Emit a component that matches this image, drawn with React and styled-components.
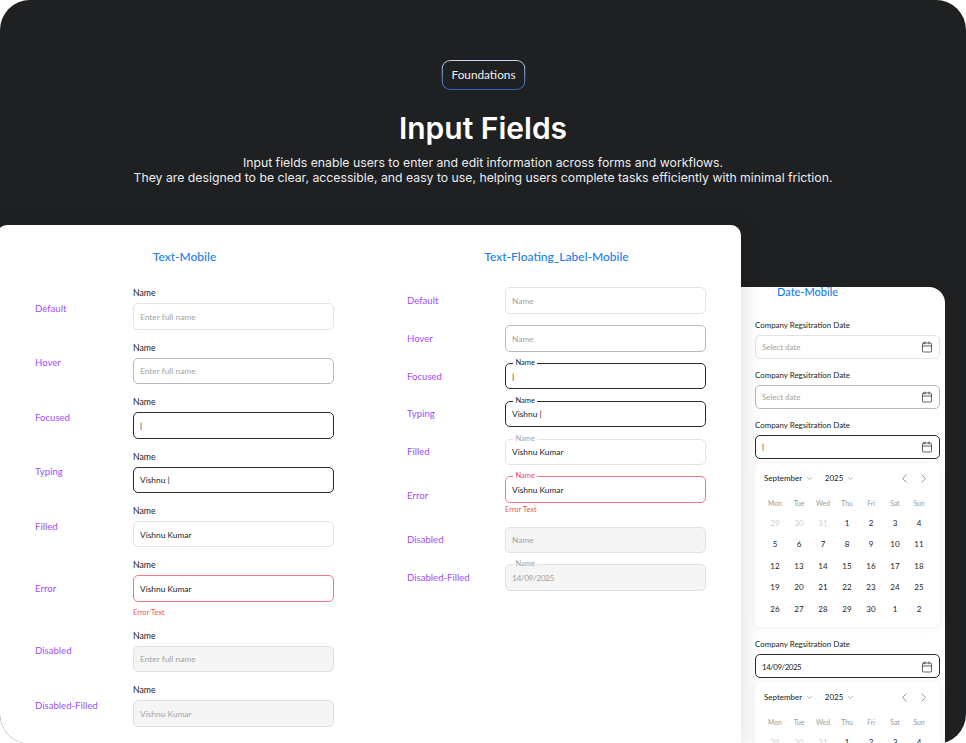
import React from 'react';
import styled, { createGlobalStyle, css } from 'styled-components';
import { Calendar, ChevronDown, ChevronLeft, ChevronRight } from 'lucide-react';

const GlobalStyle = createGlobalStyle`
  html, body {
    margin: 0;
    padding: 0;
    background: #fff;
    overflow: hidden;
    font-family: "Lato", "Liberation Sans", sans-serif;
  }
  * { box-sizing: border-box; }
`

const Panel = styled.div`
  width: 966px;
  height: 744px;
  background: #1e2022;
  border-radius: 30px;
  overflow: hidden;
`

const Header = styled.header`
  height: 225px;
  padding-top: 60px;
  display: flex;
  flex-direction: column;
  align-items: center;
`

const Chip = styled.div`
  width: 84px;
  height: 29.5px;
  display: flex;
  align-items: center;
  justify-content: center;
  font-size: 11.8px;
  color: #f0f0f0;
  border: 1px solid transparent;
  border-radius: 9px;
  transform: translateX(0.5px);
  background:
    linear-gradient(#1e2022, #1e2022) padding-box,
    linear-gradient(#c4d9f2, #2b62ba) border-box;
`

const Title = styled.h1`
  margin: 20.5px 0 0;
  font-family: "Inter", sans-serif;
  font-size: 30px;
  line-height: 36px;
  font-weight: 600;
  letter-spacing: 0;
  color: #fff;
`

const Subtitle = styled.p`
  margin: 9px 0 0;
  font-family: "Inter", sans-serif;
  font-size: 12.25px;
  line-height: 15px;
  text-align: center;
  color: #eceded;
`

const Sheets = styled.div`
  display: flex;
  align-items: flex-start;
`

const MainSheet = styled.section`
  position: relative;
  z-index: 1;
  flex: none;
  width: 744px;
  min-height: 520px;
  margin-left: -3px;
  padding: 0 35px 0 38px;
  display: flex;
  justify-content: space-between;
  background: #fff;
  border-radius: 10px 10px 0 0;
  box-shadow: 0 0 22px rgba(0, 0, 0, 0.16);
`

const Column = styled.div`
  width: 299px;
`

const ColumnTitle = styled.h2`
  margin: 0;
  padding-top: 25px;
  height: 62.4px;
  font-size: 12px;
  line-height: 14px;
  font-weight: 500;
  text-align: center;
  color: #1a7df0;
`

const Rows = styled.div`
  display: flex;
  flex-direction: column;
  gap: ${p => p.$gap}px;
`

const Row = styled.div`
  display: grid;
  grid-template-columns: 98px 201px;
  align-items: center;
`

const StateName = styled.span`
  font-size: 9.6px;
  color: #a04dff;
`

const FieldLabel = styled.div`
  margin-bottom: ${p => p.$gap || 4}px;
  font-size: ${p => p.$small ? 7.9 : 8.7}px;
  line-height: 12px;
  color: #222;
`

const fieldStates = {
  default: css`border-color: #e3e3e3;`,
  hover: css`border-color: #b9b9b9;`,
  focused: css`border-color: #2a2a2a; border-width: 1.3px;`,
  error: css`border-color: #f0787c; border-width: 1.2px;`,
  disabled: css`border-color: #e0e0e0; background: #f5f5f5;`,
}

const Field = styled.div`
  position: relative;
  height: ${p => p.$height || 26.4}px;
  padding: 1px 6px 0;
  display: flex;
  align-items: center;
  justify-content: space-between;
  font-size: ${p => p.$small ? 7.9 : 8.4}px;
  color: ${p => p.$muted ? '#a3a3a3' : '#1d1d1d'};
  background: #fff;
  border: 1px solid;
  border-radius: 5px;
  ${p => fieldStates[p.$state || 'default']}
`

const FieldValue = styled.span`
  letter-spacing: ${p => p.$date ? -0.45 : 0}px;
`

const FloatLabel = styled.span`
  position: absolute;
  top: -6px;
  left: 7px;
  padding: 0 2.5px;
  font-size: 7.5px;
  line-height: 10px;
  color: ${p => p.$color};
  background: linear-gradient(#fff 50%, ${p => p.$below} 50%);
`

const ErrorText = styled.div`
  margin-top: ${p => p.$gap}px;
  font-size: 7px;
  line-height: 11px;
  letter-spacing: 0.2px;
  color: #ef4a50;
`

const DateSheet = styled.section`
  flex: none;
  width: 204px;
  height: 470px;
  margin-top: 62px;
  padding: 0 5px 0 14px;
  background: #fff;
  border-radius: 0 16px 0 0;
`

const DateTitle = styled.h2`
  margin: 0;
  padding-left: 22px;
  height: 32px;
  font-size: 11px;
  line-height: 10px;
  font-weight: 500;
  color: #1a7df0;
`

const DateGroup = styled.div`
  margin-bottom: ${p => p.$after}px;
`

const Picker = styled.div`
  height: ${p => p.$height || 164}px;
  margin-bottom: ${p => p.$after || 0}px;
  padding: 0 8px;
  background: #fff;
  border-radius: 6px;
  box-shadow: 0 1px 8px rgba(0, 0, 0, 0.07);
`

const PickerHead = styled.div`
  height: 30px;
  padding: 0 1px;
  display: flex;
  align-items: center;
  font-size: 8px;
  color: #222;
`

const PickerSelect = styled.span`
  margin-right: ${p => p.$after}px;
  display: flex;
  align-items: center;
  gap: 3px;
  svg { color: #9a9a9a; }
`

const PickerNav = styled.span`
  margin-left: auto;
  display: flex;
  gap: 4px;
  svg { color: #8a8a8a; }
`

const WeekRow = styled.div`
  height: 18.5px;
  display: grid;
  grid-template-columns: repeat(7, 24px);
  align-items: center;
  text-align: center;
  font-size: 6.8px;
  color: #9a9a9a;
`

const DayGrid = styled.div`
  display: grid;
  grid-template-columns: repeat(7, 24px);
  grid-auto-rows: 21.6px;
  align-items: center;
  text-align: center;
  font-size: 8px;
`

const Day = styled.span`
  color: ${p => p.$faded ? '#cfcfcf' : '#1d1d1d'};
`

const plainRows = [
  { name: 'Default', text: 'Enter full name', muted: true },
  { name: 'Hover', text: 'Enter full name', muted: true, state: 'hover' },
  { name: 'Focused', text: '|', state: 'focused' },
  { name: 'Typing', text: 'Vishnu |', state: 'focused' },
  { name: 'Filled', text: 'Vishnu Kumar' },
  { name: 'Error', text: 'Vishnu Kumar', state: 'error', error: true },
  { name: 'Disabled', text: 'Enter full name', muted: true, state: 'disabled' },
  { name: 'Disabled-Filled', text: 'Vishnu Kumar', muted: true, state: 'disabled' },
]

const floatRows = [
  { name: 'Default', text: 'Name', muted: true },
  { name: 'Hover', text: 'Name', muted: true, state: 'hover' },
  { name: 'Focused', text: '|', state: 'focused', float: '#222' },
  { name: 'Typing', text: 'Vishnu |', state: 'focused', float: '#222' },
  { name: 'Filled', text: 'Vishnu Kumar', float: '#a3a3a3' },
  { name: 'Error', text: 'Vishnu Kumar', state: 'error', float: '#ef4a50', error: true },
  { name: 'Disabled', text: 'Name', muted: true, state: 'disabled' },
  { name: 'Disabled-Filled', text: '14/09/2025', muted: true, state: 'disabled', float: '#a3a3a3', date: true },
]

const weekDays = ['Mon', 'Tue', 'Wed', 'Thu', 'Fri', 'Sat', 'Sun']

const days = [
  ...[29, 30, 31].map(d => ({ d, faded: true })),
  ...Array.from({ length: 30 }, (_, i) => ({ d: i + 1 })),
  { d: 1 },
  { d: 2 },
]

const DatePicker = ({ after }) => (
  <Picker $after={after}>
    <PickerHead>
      <PickerSelect $after={10.5}>September <ChevronDown size={9} /></PickerSelect>
      <PickerSelect>2025 <ChevronDown size={9} /></PickerSelect>
      <PickerNav>
        <ChevronLeft size={15} strokeWidth={1.5} />
        <ChevronRight size={15} strokeWidth={1.5} />
      </PickerNav>
    </PickerHead>
    <WeekRow>{weekDays.map(w => <span key={w}>{w}</span>)}</WeekRow>
    <DayGrid>
      {days.map((day, i) => <Day key={i} $faded={day.faded}>{day.d}</Day>)}
    </DayGrid>
  </Picker>
)

const DateField = ({ text, state, muted, date, after }) => (
  <DateGroup $after={after}>
    <FieldLabel $gap={4} $small>Company Regsitration Date</FieldLabel>
    <Field $height={23.6} $state={state} $muted={muted} $small>
      <FieldValue $date={date}>{text}</FieldValue>
      <Calendar size={12} color="#222" strokeWidth={1.4} />
    </Field>
  </DateGroup>
)

export default function App() {
  return (
    <Panel>
      <GlobalStyle />
      <Header>
        <Chip>Foundations</Chip>
        <Title>Input Fields</Title>
        <Subtitle>
          Input fields enable users to enter and edit information across forms and workflows.<br />
          They are designed to be clear, accessible, and easy to use, helping users complete tasks efficiently with minimal friction.
        </Subtitle>
      </Header>
      <Sheets>
        <MainSheet>
          <Column>
            <ColumnTitle>Text-Mobile</ColumnTitle>
            <Rows $gap={12}>
              {plainRows.map(row => (
                <Row key={row.name}>
                  <StateName>{row.name}</StateName>
                  <div>
                    <FieldLabel>Name</FieldLabel>
                    <Field $state={row.state} $muted={row.muted}>{row.text}</Field>
                    {row.error && <ErrorText $gap={5}>Error Text</ErrorText>}
                  </div>
                </Row>
              ))}
            </Rows>
          </Column>
          <Column>
            <ColumnTitle>Text-Floating_Label-Mobile</ColumnTitle>
            <Rows $gap={11.4}>
              {floatRows.map(row => (
                <Row key={row.name}>
                  <StateName>{row.name}</StateName>
                  <div>
                    <Field $state={row.state} $muted={row.muted}>
                      {row.float && (
                        <FloatLabel
                          $color={row.float}
                          $below={row.state === 'disabled' ? '#f5f5f5' : '#fff'}
                        >
                          Name
                        </FloatLabel>
                      )}
                      <FieldValue $date={row.date}>{row.text}</FieldValue>
                    </Field>
                    {row.error && <ErrorText $gap={1.6}>Error Text</ErrorText>}
                  </div>
                </Row>
              ))}
            </Rows>
          </Column>
        </MainSheet>
        <DateSheet>
          <DateTitle>Date-Mobile</DateTitle>
          <DateField text="Select date" muted after={10.5} />
          <DateField text="Select date" muted state="hover" after={10.5} />
          <DateField text="|" state="focused" after={4.5} />
          <DatePicker after={11} />
          <DateField text="14/09/2025" state="focused" date after={4.5} />
          <DatePicker />
        </DateSheet>
      </Sheets>
    </Panel>
  );
}
